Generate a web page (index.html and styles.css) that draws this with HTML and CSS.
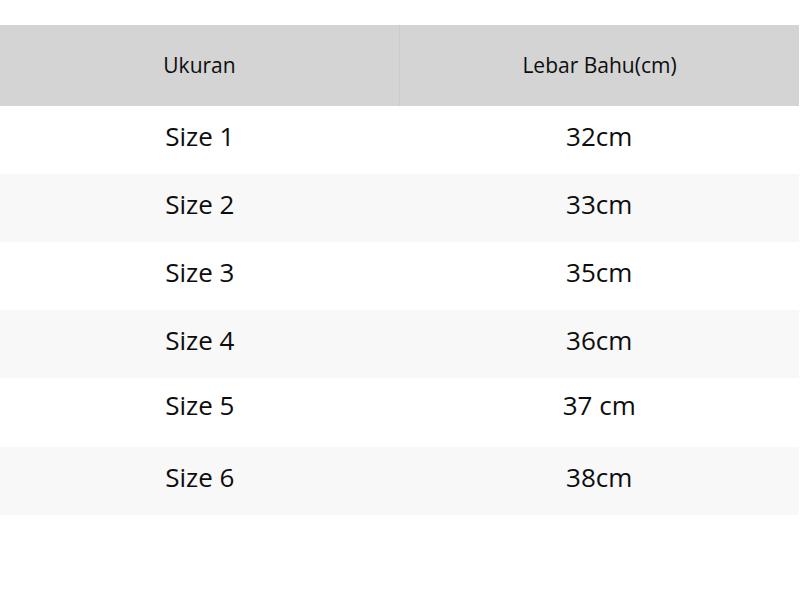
FILE: index.html
```html
<!DOCTYPE html>
<html lang="id">
<head>
<meta charset="utf-8">
<title>Ukuran</title>
<link rel="stylesheet" href="styles.css">
</head>
<body>
<table class="size-table">
  <thead>
    <tr class="head-row">
      <th class="col-size">Ukuran</th>
      <th class="col-width">Lebar Bahu(cm)</th>
    </tr>
  </thead>
  <tbody>
    <tr class="row"><td>Size 1</td><td>32cm</td></tr>
    <tr class="row alt"><td>Size 2</td><td>33cm</td></tr>
    <tr class="row"><td>Size 3</td><td>35cm</td></tr>
    <tr class="row alt"><td>Size 4</td><td>36cm</td></tr>
    <tr class="row raised"><td>Size 5</td><td>37 cm</td></tr>
    <tr class="row alt"><td>Size 6</td><td>38cm</td></tr>
  </tbody>
</table>
</body>
</html>
```
FILE: styles.css
```css
html, body {
  margin: 0;
  padding: 0;
  background: #ffffff;
}
body {
  padding-top: 25px;
  font-family: "Open Sans", "Noto Sans", sans-serif;
  color: #0d0d0d;
}
.size-table {
  width: 799px;
  border-collapse: collapse;
  table-layout: fixed;
}
.head-row {
  height: 81px;
  background: #d4d4d4;
}
.head-row th {
  font-size: 21px;
  font-weight: 400;
  text-align: center;
  vertical-align: middle;
  padding: 0 0 2px 0;
}
.head-row .col-size {
  border-right: 1px solid #cacaca;
}
.row {
  height: 68px;
}
.row td {
  font-size: 26px;
  text-align: center;
  vertical-align: middle;
  padding: 0 0 8px 0;
}
.alt {
  background: #f8f8f8;
}
.raised {
  height: 69px;
}
.raised td {
  padding-bottom: 16px;
}
```
